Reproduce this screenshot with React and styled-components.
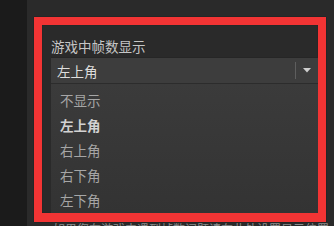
import React from "react";
import styled, { createGlobalStyle } from "styled-components";

const Global = createGlobalStyle`
  html, body { margin: 0; padding: 0; background: #2a2a2a; overflow: hidden; }
  body { font-family: "Noto Sans CJK SC", "Noto Sans", sans-serif; }
`;

const Page = styled.div`
  display: flex;
  width: 334px;
  height: 226px;
  overflow: hidden;
  background: #2a2a2a;
`;

const Sidebar = styled.div`
  width: 27px;
  flex: none;
  background: #1b1b1b;
`;

const Main = styled.div`
  flex: 1;
  display: flex;
  flex-direction: column;
  padding: 17px 8px 0 7px;
  min-width: 0;
`;

const Frame = styled.div`
  box-sizing: border-box;
  width: 292px;
  height: 205px;
  flex: none;
  border: 8px solid #f23434;
  border-bottom-width: 9px;
  box-shadow: 0 0 1px rgba(0, 0, 0, 0.6), inset 0 0 1px rgba(0, 0, 0, 0.6);
  overflow: hidden;
  padding: 12px 0 0 9px;
  display: flex;
  flex-direction: column;
`;

const Label = styled.div`
  font-size: 13.5px;
  line-height: 18px;
  color: #c6c6c6;
  margin-bottom: 2px;
`;

const Select = styled.div`
  box-sizing: border-box;
  height: 28px;
  display: flex;
  align-items: center;
  background: #3d3d3d;
  border-top: 1px solid #262626;
  padding-left: 6px;
`;

const SelectValue = styled.span`
  flex: 1;
  font-size: 13.5px;
  color: #dedede;
  line-height: 18px;
`;

const Divider = styled.span`
  width: 1px;
  height: 17px;
  background: #5e5e5e;
`;

const Arrow = styled.span`
  width: 22px;
  display: flex;
  justify-content: center;
  align-items: center;
`;

const List = styled.div`
  flex: 1;
  background: linear-gradient(#3b3b3b, #333333);
  border-top: 1px solid #2c2c2c;
  padding-top: 4px;
`;

const Item = styled.div`
  height: 25px;
  line-height: 25px;
  padding-left: 9px;
  font-size: 13.5px;
  color: ${(p) => (p.$active ? "#d2d2d2" : "#a6a6a6")};
  font-weight: ${(p) => (p.$active ? 700 : 400)};
`;

const Footnote = styled.div`
  font-size: 12px;
  line-height: 14px;
  color: #8a8a8a;
  padding-left: 19px;
  white-space: nowrap;
`;

const items = ["不显示", "左上角", "右上角", "右下角", "左下角"];

export default function App() {
  return (
    <Page>
      <Global />
      <Sidebar />
      <Main>
        <Frame>
          <Label>游戏中帧数显示</Label>
          <Select>
            <SelectValue>左上角</SelectValue>
            <Divider />
            <Arrow>
              <svg width="8" height="5" viewBox="0 0 8 5">
                <path d="M0 0 H8 L4 4.5 Z" fill="#cfcfcf" />
              </svg>
            </Arrow>
          </Select>
          <List>
            {items.map((t, i) => (
              <Item key={t} $active={i === 1}>
                {t}
              </Item>
            ))}
          </List>
        </Frame>
        <Footnote>如果您在游戏中遇到帧数问题请在此处设置显示位置</Footnote>
      </Main>
    </Page>
  );
}
